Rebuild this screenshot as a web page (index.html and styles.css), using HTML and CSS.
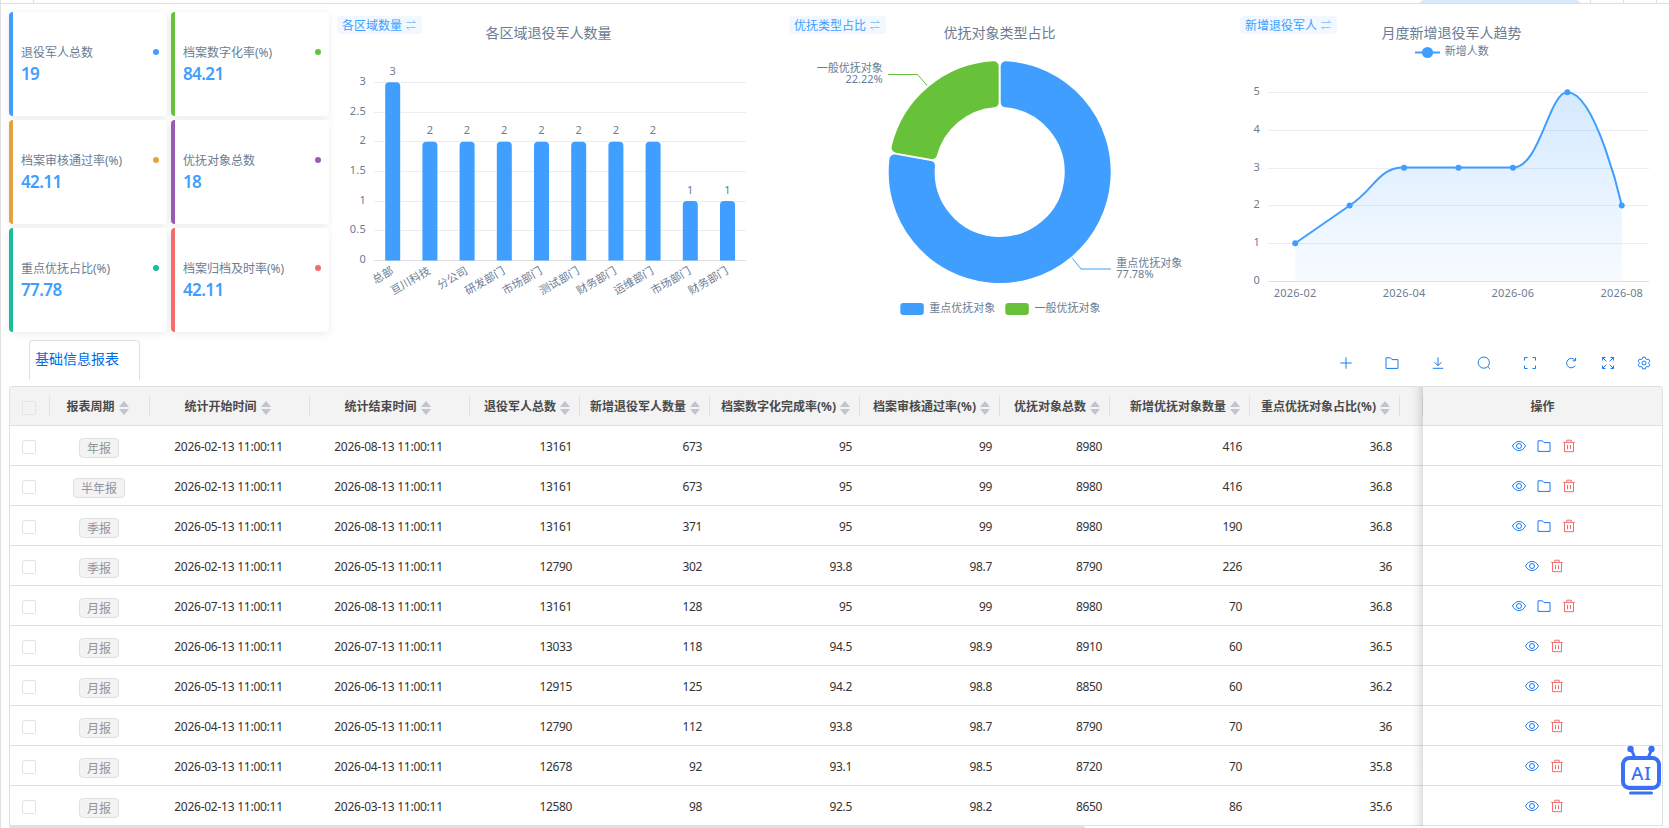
FILE: index.html
```html
<!DOCTYPE html>
<html lang="zh-CN">

<head>
  <meta charset="UTF-8">
  <meta name="viewport" content="width=device-width, initial-scale=1.0">
  <title>基础信息报表</title>
  <link rel="stylesheet" href="styles.css">
</head>

<body>

  <!-- Icons -->
  <svg class="sprite">
    <symbol id="i-swap" viewBox="0 0 10 10"><path d="M0.5 2.5h9M7.2 0.5l2.3 2M9.5 7.5h-9M2.8 9.5l-2.3-2" /></symbol>
    <symbol id="i-plus" viewBox="0 0 14 14"><path d="M7 1.3v11.4M1.3 7h11.4" /></symbol>
    <symbol id="i-folder" viewBox="0 0 14 14"><path d="M1 1.8h4.4l1.6 1.8h6v8.8h-12z" /></symbol>
    <symbol id="i-download" viewBox="0 0 14 14"><path d="M7 1.5v8M3.4 6.2L7 9.6l3.6-3.4M1.8 12.3h10.4" /></symbol>
    <symbol id="i-search" viewBox="0 0 14 14"><circle cx="6.8" cy="6.6" r="5.6" /><path d="M10.8 10.6l2.1 2.3" /></symbol>
    <symbol id="i-full" viewBox="0 0 14 14"><path d="M1.5 4.5v-3h3M9.5 1.5h3v3M12.5 9.5v3h-3M4.5 12.5h-3v-3" /></symbol>
    <symbol id="i-refresh" viewBox="0 0 14 14"><path d="M11 4.2A4.700 4.700 0 1 0 11.3 9.6M11.600 1.800v3h-3" /></symbol>
    <symbol id="i-expand" viewBox="0 0 14 14"><path d="M1.5 4.5v-3h3M1.5 1.5l3.8 3.8M9.5 1.5h3v3M12.5 1.500L8.7 5.3M12.5 9.5v3h-3M12.5 12.500L8.7 8.7M4.5 12.5h-3v-3M1.5 12.5l3.8-3.8" /></symbol>
    <symbol id="i-gear" viewBox="0 0 14 14"><path d="M5.700 1.200h2.600l.5 1.700 1.100.6 1.700-.4 1.300 2.200-1.200 1.200v1l1.200 1.200-1.300 2.200-1.700-.4-1.100.6-.5 1.700H5.700l-.5-1.700-1.100-.6-1.700.4-1.300-2.200 1.200-1.200v-1L1.100 5.300l1.300-2.200 1.700.4 1.100-.6z" /><circle cx="7" cy="7" r="2" /></symbol>
    <symbol id="i-eye" viewBox="0 0 14 14"><path d="M.5 7C2.1 4.2 4.3 2.4 7 2.4S11.9 4.200 13.500 7C11.900 9.800 9.700 11.600 7 11.600S2.100 9.800.5 7z" /><circle cx="7" cy="7" r="2.500" /></symbol>
    <symbol id="i-trash" viewBox="0 0 14 14"><path d="M1.2 3.400h11.600M4.800 3.200V1.200h4.400v2M2.500 3.500v9.200h9V3.500M5.500 6v4.200M8.500 6v4.200" /></symbol>
  </svg>

  <!-- Bottom edge of the window tab bar -->
  <div class="tabbar">
    <span class="tabbar-home"></span>
    <span class="tabbar-current"></span>
    <span class="tabbar-btn"></span>
    <span class="tabbar-btn"></span>
    <span class="tabbar-btn"></span>
  </div>

  <!-- Overview -->
  <div class="overview">
    <div class="cards" id="cards"></div>

    <div class="chart chart-bar">
      <div class="switch">各区域数量<svg class="swap"><use href="#i-swap" /></svg></div>
      <svg width="452" height="320" viewBox="329 12 452 320">
        <text class="title" x="548.5" y="38">各区域退役军人数量</text>
        <g id="barChart"></g>
      </svg>
    </div>

    <div class="chart chart-pie">
      <div class="switch">优抚类型占比<svg class="swap"><use href="#i-swap" /></svg></div>
      <svg width="451" height="320" viewBox="781 12 451 320">
        <text class="title" x="999.5" y="38">优抚对象类型占比</text>
        <g transform="translate(999.7 172)">
          <path class="slice blue" d="M6 -105.83A106 106 0 1 1 -105.26 -12.46L-69.72 -6.2A70 70 0 1 0 6 -69.74z" />
          <path class="slice green" d="M-6 -105.83A106 106 0 0 0 -103.18 -24.28L-67.64 -18.02A70 70 0 0 1 -6 -69.74z" />
        </g>
        <path class="leader" stroke="#67c23a" d="M927 85.5L917.5 74.5H888" />
        <path class="leader" stroke="#409eff" d="M1072.5 258.5L1081 269H1111" />
        <text class="end" x="882.7" y="72">一般优抚对象</text>
        <text class="end" x="882.7" y="83">22.22%</text>
        <text x="1116.3" y="267">重点优抚对象</text>
        <text x="1116.3" y="278">77.78%</text>
        <rect class="fill-blue" x="900.3" y="303" width="23.5" height="12" rx="3" />
        <text x="929.3" y="312">重点优抚对象</text>
        <rect class="fill-green" x="1005.3" y="303" width="23.5" height="12" rx="3" />
        <text x="1034.5" y="312">一般优抚对象</text>
      </svg>
    </div>

    <div class="chart chart-line">
      <div class="switch">新增退役军人<svg class="swap"><use href="#i-swap" /></svg></div>
      <svg width="437" height="320" viewBox="1232 12 437 320">
        <defs>
          <linearGradient id="area" x1="0" y1="0" x2="0" y2="1">
            <stop offset="0" stop-color="#409eff" stop-opacity="0.22" />
            <stop offset="1" stop-color="#409eff" stop-opacity="0.04" />
          </linearGradient>
        </defs>
        <text class="title" x="1451.5" y="38">月度新增退役军人趋势</text>
        <path class="line" d="M1415 52.5h25" />
        <circle class="fill-blue" cx="1427.5" cy="52.5" r="5.6" />
        <text x="1444.8" y="55">新增人数</text>
        <g id="lineChart"></g>
      </svg>
    </div>
  </div>

  <!-- Tab and toolbar -->
  <div class="report-head">
    <div class="report-tab">基础信息报表</div>
    <div class="toolbar">
      <svg><use href="#i-plus" /></svg>
      <svg><use href="#i-folder" /></svg>
      <svg><use href="#i-download" /></svg>
      <svg><use href="#i-search" /></svg>
      <svg class="near"><use href="#i-full" /></svg>
      <svg class="nearer"><use href="#i-refresh" /></svg>
      <svg class="nearer"><use href="#i-expand" /></svg>
      <svg><use href="#i-gear" /></svg>
    </div>
  </div>

  <!-- Report table -->
  <div class="table" id="table"></div>
  <div class="scrollbar"><div class="scrollbar-thumb"></div></div>

  <!-- AI assistant -->
  <svg class="robot" width="42" height="52" viewBox="0 0 42 52">
    <path d="M11.5 5l3.5 8M31.5 5l-3.5 8" stroke-width="3" />
    <circle cx="10.5" cy="4" r="3.2" />
    <circle cx="31.5" cy="4" r="3.2" />
    <rect x="3" y="13" width="36" height="30" rx="6.5" stroke-width="4" />
    <path d="M10.5 48h21" stroke-width="3" />
    <text x="21.5" y="34.5">AI</text>
  </svg>

  <script>
    const cards = [
      ['退役军人总数', '19', '#409eff'],
      ['档案数字化率(%)', '84.21', '#67c23a'],
      ['档案审核通过率(%)', '42.11', '#e6a23c'],
      ['优抚对象总数', '18', '#9b59b6'],
      ['重点优抚占比(%)', '77.78', '#1abc9c'],
      ['档案归档及时率(%)', '42.11', '#f56c6c']
    ];

    document.getElementById('cards').innerHTML = cards.map(c => `
      <div class="card" style="color: ${c[2]}">
        <div class="card-label"><span>${c[0]}</span><i class="dot"></i></div>
        <div class="card-value">${c[1]}</div>
      </div>`).join('');

    // Bar chart
    const regions = [
      ['总部', 3], ['亘川科技', 2], ['分公司', 2], ['研发部门', 2], ['市场部门', 2],
      ['测试部门', 2], ['财务部门', 2], ['运维部门', 2], ['市场部门', 1], ['财务部门', 1]
    ];
    let bars = '';
    for (let i = 0; i <= 6; i++) {
      const y = Math.round(260 - i * 29.7) + 0.5;
      bars += `<path class="${i ? 'grid' : 'axis'}" d="M374 ${y}H746" />`;
      bars += `<text class="axis-label end" x="366" y="${y + 2.5}">${i / 2}</text>`;
    }
    regions.forEach((r, i) => {
      const x = 392.7 + i * 37.2;
      const y = 260.5 - r[1] * 59.4;
      bars += `<path class="fill-blue" d="M${x - 7.5} 260.5V${y + 4}q0 -4 4 -4h7q4 0 4 4V260.5z" />`;
      bars += `<text class="axis-label mid" x="${x}" y="${y - 7.5}">${r[1]}</text>`;
      bars += `<text class="end" transform="translate(${x + 1.5} 273) rotate(-30)">${r[0]}</text>`;
    });
    document.getElementById('barChart').innerHTML = bars;

    // Line chart
    const months = [1, 2, 3, 3, 3, 5, 2];
    const curve = 'M1295.2 243.3L1349.7 205.5C1375 189 1378 167.5 1404 167.5H1513' +
      'C1540 167.5 1549 92.2 1567.3 92.2C1596 92.2 1621.8 205.5 1621.8 205.5';
    let trend = '';
    for (let i = 0; i <= 5; i++) {
      const y = Math.round(280.6 - i * 37.7) + 0.5;
      trend += `<path class="${i ? 'grid' : 'axis'}" d="M1268 ${y}H1649" />`;
      trend += `<text class="axis-label end" x="1260" y="${y + 2.5}">${i}</text>`;
    }
    trend += `<path fill="url(#area)" d="${curve}V281H1295.2z" /><path class="line" d="${curve}" />`;
    months.forEach((v, i) => {
      trend += `<circle class="fill-blue" cx="${1295.2 + i * 54.43}" cy="${281 - v * 37.75}" r="3" />`;
    });
    ['2026-02', '2026-04', '2026-06', '2026-08'].forEach((m, i) => {
      trend += `<text class="axis-label mid" x="${1295.2 + i * 108.86}" y="297">${m}</text>`;
    });
    document.getElementById('lineChart').innerHTML = trend;

    // Table
    const heads = ['报表周期', '统计开始时间', '统计结束时间', '退役军人总数', '新增退役军人数量', '档案数字化完成率(%)',
      '档案审核通过率(%)', '优抚对象总数', '新增优抚对象数量', '重点优抚对象占比(%)'];
    // last value: whether the report can be archived
    const rows = [
      ['年报', '2026-02-13', '2026-08-13', 13161, 673, 95, 99, 8980, 416, 36.8, true],
      ['半年报', '2026-02-13', '2026-08-13', 13161, 673, 95, 99, 8980, 416, 36.8, true],
      ['季报', '2026-05-13', '2026-08-13', 13161, 371, 95, 99, 8980, 190, 36.8, true],
      ['季报', '2026-02-13', '2026-05-13', 12790, 302, 93.8, 98.7, 8790, 226, 36, false],
      ['月报', '2026-07-13', '2026-08-13', 13161, 128, 95, 99, 8980, 70, 36.8, true],
      ['月报', '2026-06-13', '2026-07-13', 13033, 118, 94.5, 98.9, 8910, 60, 36.5, false],
      ['月报', '2026-05-13', '2026-06-13', 12915, 125, 94.2, 98.8, 8850, 60, 36.2, false],
      ['月报', '2026-04-13', '2026-05-13', 12790, 112, 93.8, 98.7, 8790, 70, 36, false],
      ['月报', '2026-03-13', '2026-04-13', 12678, 92, 93.1, 98.5, 8720, 70, 35.8, false],
      ['月报', '2026-02-13', '2026-03-13', 12580, 98, 92.5, 98.2, 8650, 86, 35.6, false]
    ];

    let html = '<div class="row head"><div class="cell"><i class="checkbox"></i></div>';
    heads.forEach((h, i) => {
      html += `<div class="cell ${i > 2 ? 'num' : ''}">${h}<i class="sort"></i></div>`;
    });
    html += '<div class="cell"></div><div class="cell fixed">操作</div></div>';

    rows.forEach(r => {
      html += '<div class="row"><div class="cell"><i class="checkbox"></i></div>';
      html += `<div class="cell"><span class="tag">${r[0]}</span></div>`;
      html += `<div class="cell time">${r[1]} 11:00:11</div><div class="cell time">${r[2]} 11:00:11</div>`;
      r.slice(3, 10).forEach(v => html += `<div class="cell num">${v}</div>`);
      html += `<div class="cell"></div><div class="cell fixed">
        <svg><use href="#i-eye" /></svg>
        ${r[10] ? '<svg><use href="#i-folder" /></svg>' : ''}
        <svg class="danger"><use href="#i-trash" /></svg>
      </div></div>`;
    });
    document.getElementById('table').innerHTML = html;
  </script>

</body>

</html>
```
FILE: styles.css
```css
* {
  margin: 0;
  padding: 0;
  box-sizing: border-box;
}

body {
  width: 1669px;
  height: 828px;
  overflow: hidden;
  border-left: 1px solid #e0e0e0;
  background-color: #fff;
  font-family: "Noto Sans", "Noto Sans CJK SC", sans-serif;
  font-size: 12px;
  color: #333;
}

svg {
  display: block;
  fill: none;
}

.sprite {
  display: none;
}

/* Window tab bar */
.tabbar {
  display: flex;
  height: 4px;
  border-bottom: 1px solid #e0e0e0;
}

.tabbar-home {
  width: 33px;
  border-right: 1px solid #e0e0e0;
}

.tabbar-current {
  width: 162px;
  margin-left: 1385px;
  background-color: #d9e8fb;
  clip-path: polygon(4px 0, 158px 0, 100% 100%, 0 100%);
}

.tabbar-btn {
  width: 33px;
  border-right: 1px solid #e0e0e0;
}

.tabbar-current + .tabbar-btn {
  width: 10px;
}

/* Overview cards */
.overview {
  display: flex;
  height: 328px;
  padding: 8px 0 0 8px;
}

.cards {
  display: grid;
  grid-template-columns: 158px 158px;
  grid-template-rows: repeat(3, 104px);
  gap: 4px;
  flex: none;
}

.card {
  display: flex;
  flex-direction: column;
  justify-content: center;
  padding: 0 8px;
  border-left: 4px solid;
  border-radius: 4px;
  background-color: #fff;
  box-shadow: 0 2px 8px rgba(0, 0, 0, 0.08);
}

.card-label {
  display: flex;
  align-items: center;
  justify-content: space-between;
  height: 20px;
}

.card-label span {
  margin-top: -1px;
  color: #6b7c93;
}

.dot {
  width: 6px;
  height: 6px;
  border-radius: 50%;
  background-color: currentColor;
}

.card-value {
  line-height: 24px;
  font-size: 17px;
  font-weight: 600;
  letter-spacing: -0.6px;
  color: #409eff;
}

/* Charts */
.chart {
  position: relative;
  flex: none;
}

.switch {
  position: absolute;
  top: 4px;
  left: 8px;
  display: flex;
  align-items: center;
  gap: 4px;
  height: 18px;
  padding: 0 6px 1px 5px;
  border-radius: 4px;
  background-color: #f2f8ff;
  color: #409eff;
}

.swap {
  width: 10px;
  height: 10px;
  stroke: #8cc5ff;
}

.chart text {
  font-size: 11px;
  fill: #6b7c93;
}

.chart .axis-label {
  letter-spacing: 0.2px;
}

.chart .title {
  font-size: 14px;
  text-anchor: middle;
}

.chart .mid {
  text-anchor: middle;
}

.chart .end {
  text-anchor: end;
}

.grid {
  stroke: #ebedf0;
}

.axis {
  stroke: #dcdfe6;
}

.fill-blue {
  fill: #409eff;
}

.fill-green {
  fill: #67c23a;
}

.slice {
  stroke-width: 10;
  stroke-linejoin: round;
}

.slice.blue {
  fill: #409eff;
  stroke: #409eff;
}

.slice.green {
  fill: #67c23a;
  stroke: #67c23a;
}

.line {
  stroke: #409eff;
  stroke-width: 2;
}

/* Report tab and toolbar */
.report-head {
  display: flex;
  justify-content: space-between;
  height: 54px;
  padding: 8px 18px 0 28px;
}

.report-tab {
  width: 111px;
  height: 40px;
  padding-left: 5px;
  border: 1px solid #e0e0e0;
  border-bottom: none;
  border-radius: 4px 4px 0 0;
  line-height: 35px;
  font-size: 14px;
  color: #006be6;
}

.toolbar {
  display: flex;
  height: 46px;
  align-items: center;
}

.toolbar svg {
  width: 14px;
  height: 14px;
  margin-right: 32px;
  stroke: #1a7af0;
}

.toolbar .near {
  margin-right: 27.5px;
}

.toolbar .nearer {
  margin-right: 22.5px;
}

.toolbar svg:last-child {
  margin-right: 0;
}

/* Table */
.table {
  width: 1654px;
  margin-left: 8px;
  border: 1px solid #e0e0e0;
  border-bottom: none;
  border-radius: 4px 4px 0 0;
  overflow: hidden;
}

.row {
  display: grid;
  grid-template-columns: 40px 100px 160px 160px 110px 130px 150px 140px 110px 140px 150px 23px 239px;
  height: 40px;
  border-bottom: 1px solid #e0e0e0;
}

.cell {
  display: flex;
  align-items: center;
  justify-content: center;
  padding-top: 2px;
  letter-spacing: -0.35px;
  white-space: nowrap;
}

.time {
  padding-right: 3px;
  letter-spacing: -0.25px;
}

.num {
  justify-content: flex-end;
  padding-right: 8px;
}

.head {
  height: 39px;
  background-color: #f3f3f3;
  font-weight: bold;
  color: #4a4a4a;
}

.head .cell {
  position: relative;
  padding-top: 0;
  padding-bottom: 1px;
  padding-right: 5px;
  letter-spacing: 0;
}

.head .num {
  padding-right: 10px;
}

.head .cell:first-child {
  padding: 3px 0 0;
}

.head .cell::after {
  content: "";
  position: absolute;
  top: 9px;
  right: 0;
  width: 1px;
  height: 20px;
  background-color: #e0e0e0;
}

.sort {
  display: flex;
  flex-direction: column;
  gap: 2px;
  margin: 4px 0 0 4px;
}

.sort::before,
.sort::after {
  content: "";
  border: 5px solid transparent;
}

.sort::before {
  border-top: none;
  border-bottom: 6px solid #c0c4cc;
}

.sort::after {
  border-bottom: none;
  border-top: 6px solid #c0c4cc;
}

.checkbox {
  width: 14px;
  height: 14px;
  margin-right: 3px;
  border: 1px solid #e4e4e6;
  border-radius: 2px;
}

.tag {
  height: 20px;
  margin: 3px 2px 0 0;
  padding: 0 7px;
  border: 1px solid #e0e0e0;
  border-radius: 4px;
  background-color: #f3f3f3;
  line-height: 19px;
  letter-spacing: 0;
  color: #909399;
}

.fixed {
  position: relative;
  gap: 11px;
  padding: 0 0 0 3px;
  background-color: #fff;
}

.fixed::before {
  content: "";
  position: absolute;
  top: 0;
  bottom: -1px;
  left: -12px;
  width: 12px;
  background: linear-gradient(to right, rgba(0, 0, 0, 0), rgba(0, 0, 0, 0.03) 45%, rgba(0, 0, 0, 0.12));
}

.head .fixed {
  padding: 0;
  background-color: #f3f3f3;
}

.head .fixed::after {
  display: none;
}

.fixed svg {
  width: 14px;
  height: 14px;
  stroke: #1a7af0;
}

.fixed .danger {
  stroke: #f56c6c;
}

.scrollbar {
  height: 3px;
  margin-left: 8px;
}

.scrollbar-thumb {
  width: 1076px;
  height: 3px;
  border-radius: 3px;
  background-color: #e0e0e0;
}

/* AI assistant */
.robot {
  position: absolute;
  left: 1620px;
  top: 745px;
  stroke: #3b6ff5;
  stroke-linecap: round;
}

.robot circle {
  fill: #3b6ff5;
  stroke: none;
}

.robot text {
  font-size: 18.5px;
  font-weight: 500;
  letter-spacing: 1px;
  text-anchor: middle;
  fill: #3b6ff5;
  stroke: none;
}
```
